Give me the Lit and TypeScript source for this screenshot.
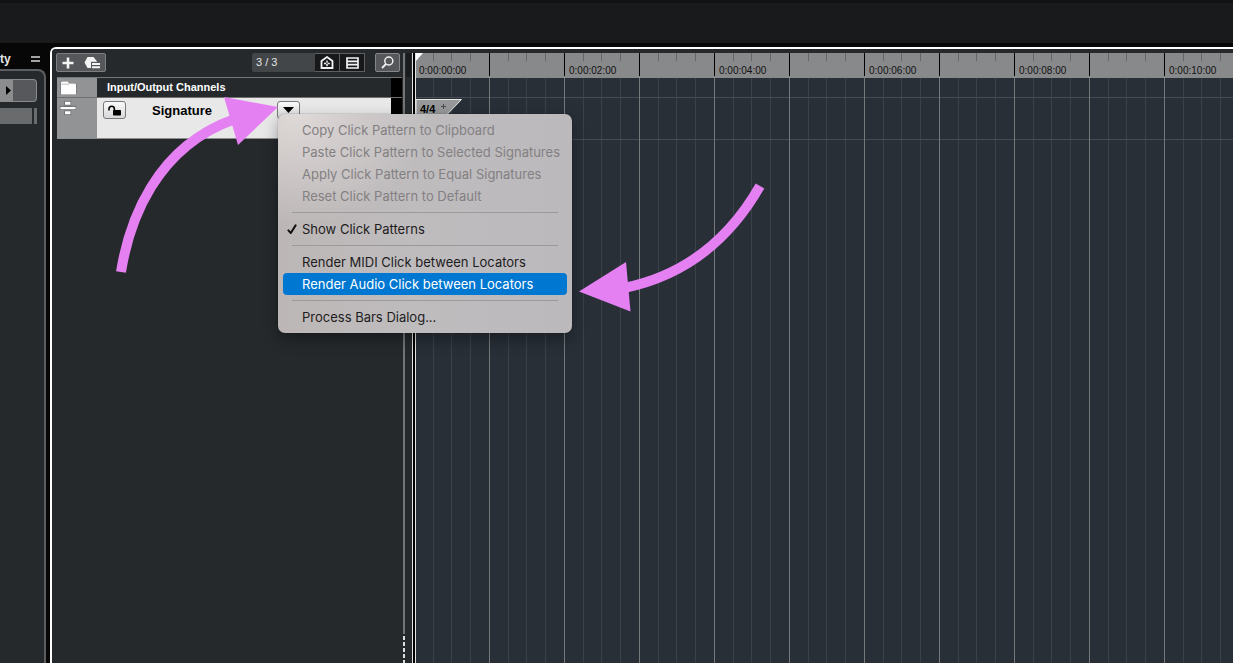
import { LitElement, html, css, nothing } from "lit";
import { customElement, state } from "lit/decorators.js";

type MenuEntry =
  | { kind: "separator" }
  | { kind: "item"; label: string; disabled?: boolean; checked?: boolean; active?: boolean };

const MENU: MenuEntry[] = [
  { kind: "item", label: "Copy Click Pattern to Clipboard", disabled: true },
  { kind: "item", label: "Paste Click Pattern to Selected Signatures", disabled: true },
  { kind: "item", label: "Apply Click Pattern to Equal Signatures", disabled: true },
  { kind: "item", label: "Reset Click Pattern to Default", disabled: true },
  { kind: "separator" },
  { kind: "item", label: "Show Click Patterns", checked: true },
  { kind: "separator" },
  { kind: "item", label: "Render MIDI Click between Locators" },
  { kind: "item", label: "Render Audio Click between Locators", active: true },
  { kind: "separator" },
  { kind: "item", label: "Process Bars Dialog..." },
];

@customElement("context-menu")
class ContextMenu extends LitElement {
  static styles = css`
    :host {
      display: block;
      box-sizing: border-box;
      padding: 5px;
      border-radius: 7px;
      font-family: Inter, "Liberation Sans", sans-serif;
      background:
        radial-gradient(ellipse 130px 110px at 20px 0, #dfd9d8 0, #dfd9d800 100%),
        linear-gradient(90deg, #bcb7b6, #bfbcbe 45%, #bbb9bc);
      box-shadow: 0 0 1px #000a, 0 6px 16px #0005;
    }
    .item {
      display: flex;
      align-items: center;
      width: 100%;
      height: 22px;
      padding: 0;
      border: 0;
      border-radius: 4px;
      background: none;
      color: #1d1c1d;
      font: 400 13px/22px Inter, "Liberation Sans", sans-serif;
      text-align: left;
      white-space: nowrap;
    }
    .item:disabled {
      color: #838082;
    }
    .item.active {
      background: #0077d0;
      color: #fff;
    }
    .mark {
      display: flex;
      flex: none;
      width: 19px;
      padding-left: 4px;
      box-sizing: border-box;
    }
    .separator {
      height: 1px;
      margin: 5px 9px;
      border: 0;
      background: #9c999b;
    }
  `;

  render() {
    return MENU.map((entry) =>
      entry.kind === "separator"
        ? html`<hr class="separator" />`
        : html`<button
            class="item ${entry.active ? "active" : ""}"
            role="menuitem"
            ?disabled=${entry.disabled}
          >
            <span class="mark"
              >${entry.checked
                ? html`<svg width="11" height="12" viewBox="0 0 11 12" fill="none">
                    <path d="M1.4 7.4 3.8 10 8.600 2.400" stroke="#111" stroke-width="2" stroke-linecap="round" stroke-linejoin="round" />
                  </svg>`
                : nothing}</span
            >${entry.label}
          </button>`
    );
  }
}

@customElement("inspector-panel")
class InspectorPanel extends LitElement {
  static styles = css`
    :host {
      display: flex;
      flex-direction: column;
      background: #070707;
      font-family: "Liberation Sans", Arial, sans-serif;
    }
    .head {
      display: flex;
      align-items: center;
      justify-content: space-between;
      box-sizing: border-box;
      height: 22px;
      padding: 2px 6px 0 0;
      color: #e6e6e6;
      font-size: 12px;
      font-weight: 700;
    }
    .menu {
      display: flex;
      padding: 0;
      border: 0;
      background: none;
    }
    .body {
      display: flex;
      flex: 1;
      flex-direction: column;
      gap: 6px;
      padding: 8px 7px 0 0;
      border: 2px solid #5b5e61;
      border-left: 0;
      border-bottom: 0;
      border-top-right-radius: 8px;
      background: #25292c;
    }
    .section {
      display: flex;
      height: 23px;
      padding: 0;
      border: 1px solid #8a8b8d;
      border-left: 0;
      border-radius: 0 4px 4px 0;
      background: #56585c;
      overflow: hidden;
    }
    .section span {
      display: flex;
      align-items: center;
      justify-content: flex-end;
      width: 13px;
      height: 100%;
      background: #8c8d8f;
    }
    .field {
      display: flex;
      gap: 2px;
      height: 16px;
    }
    .field i {
      flex: 1;
      background: #6a6b6d;
    }
    .field i + i {
      flex: 0 0 3px;
    }
  `;

  render() {
    return html`
      <div class="head">
        <span>ty</span>
        <button class="menu" aria-label="Inspector setup">
          <svg width="9" height="6"><path d="M0 1h9M0 5h9" stroke="#d8d8d8" stroke-width="1.6" /></svg>
        </button>
      </div>
      <div class="body">
        <button class="section" aria-label="Open section">
          <span><svg width="7" height="9"><path d="M0 0 5 4.5 0 9z" /></svg></span>
        </button>
        <div class="field"><i></i><i></i></div>
      </div>
    `;
  }
}

@customElement("track-list")
class TrackList extends LitElement {
  static styles = css`
    :host {
      display: block;
      padding: 4px 1px 0 4px;
      background: #25292c;
      font-family: "Liberation Sans", Arial, sans-serif;
    }
    button {
      display: flex;
      align-items: center;
      justify-content: center;
      padding: 0;
      box-sizing: border-box;
    }
    .toolbar {
      display: flex;
      height: 19px;
      padding-right: 2px;
      margin-bottom: 5px;
    }
    .group {
      display: flex;
      border: 1px solid #7d7e80;
      border-radius: 2px;
      background: #55575a;
    }
    .group button {
      width: 22px;
      border: 0;
      background: none;
    }
    .group button + button {
      width: 26px;
    }
    .visible {
      display: flex;
      margin-left: auto;
      border-radius: 2px;
      background: #434649;
      color: #e4e4e4;
      font-size: 11px;
      line-height: 19px;
    }
    .visible span {
      width: 59px;
      padding-left: 4px;
    }
    .visible button {
      width: 25px;
      border: 1px solid #5d5f61;
      border-left-width: 0;
      background: #16181a;
    }
    .search {
      width: 25px;
      margin-left: 10px;
      border: 1px solid #85868a;
      border-radius: 2px;
      background: #55575b;
    }
    .rows {
      margin-left: 1px;
      border-top: 1px solid #737577;
    }
    .row {
      display: flex;
    }
    .type {
      flex: none;
      box-sizing: border-box;
      width: 40px;
      padding: 3px 0 0 3px;
      background: #929395;
    }
    .folder {
      height: 19px;
    }
    .folder .name {
      flex: 1;
      padding-left: 10px;
      background: #25292c;
      color: #fff;
      font-size: 11px;
      font-weight: 700;
      line-height: 19px;
    }
    .end {
      flex: none;
      width: 11px;
      background: #000;
    }
    .signature {
      height: 42px;
      box-sizing: border-box;
      border-top: 1px solid #6d6f71;
      border-bottom: 1px solid #8d8e90;
    }
    .controls {
      display: flex;
      flex: 1;
      align-items: flex-start;
      padding: 3px 0 0 6px;
      background: #e8e8e8;
    }
    .controls button {
      width: 23px;
      height: 18px;
      border: 1px solid #77787a;
      border-radius: 3px;
      background: linear-gradient(#fafafa, #d8d8da);
    }
    .title {
      flex: 1;
      padding-left: 26px;
      color: #000;
      font-size: 13px;
      font-weight: 700;
      line-height: 20px;
    }
    .dropdown {
      position: relative;
      width: 114px;
    }
    .dropdown context-menu {
      position: absolute;
      top: 13px;
      left: 1px;
      width: 294px;
    }
  `;

  @state() private open = true;

  render() {
    return html`
      <div class="toolbar">
        <div class="group">
          <button aria-label="Add track">
            <svg width="12" height="12"><path d="M6 .5v11M.5 6h11" stroke="#f4f4f4" stroke-width="2.6" /></svg>
          </button>
          <button aria-label="Use track preset">
            <svg width="17" height="13" viewBox="0 0 17 13">
              <path d="M3.500 1h6L13 5.500 9.500 12h-6L.5 6.500z" fill="#f4f4f4" />
              <path d="M7 5.800h10V13H7z" fill="#55575a" />
              <path d="M8 8h8M8 11.300h8" stroke="#f4f4f4" stroke-width="2" />
            </svg>
          </button>
        </div>
        <div class="visible">
          <span>3 / 3</span>
          <button aria-label="Track divider">
            <svg width="14" height="13" viewBox="0 0 14 13" fill="none" stroke="#f2f2f2">
              <path d="M1.500 12V5L7 1l5.500 4v7z" stroke-width="1.800" />
              <path d="M7 4.500v6M4 7.500h6" stroke-width="1.400" stroke-dasharray="2.200 1.400" />
            </svg>
          </button>
          <button aria-label="Track visibility">
            <svg width="13" height="12" fill="none" stroke="#f2f2f2">
              <path d="M1 1h11v10H1zM1 4.300h11M1 7.700h11" stroke-width="1.700" />
            </svg>
          </button>
        </div>
        <button class="search" aria-label="Find tracks">
          <svg width="13" height="13" fill="none" stroke="#f0f0f0">
            <circle cx="7.800" cy="5" r="4" stroke-width="1.500" />
            <path d="M5 8 1 12" stroke-width="1.800" />
          </svg>
        </button>
      </div>
      <div class="rows">
        <div class="row folder">
          <div class="type">
            <svg width="17" height="14">
              <path d="M1 13.500V1.500L2 .5h6l1 2h6l1 1v10z" fill="#fff" stroke="#6a6b6d" stroke-width="1" paint-order="stroke" />
              <path d="M1.500 3.200h7.500" stroke="#a5a6a8" stroke-width=".8" />
            </svg>
          </div>
          <div class="name">Input/Output Channels</div>
          <div class="end"></div>
        </div>
        <div class="row signature">
          <div class="type">
            <svg width="16" height="14" fill="#fff" stroke="#66686a" stroke-width="1.400" paint-order="stroke">
              <path d="M5 .8h5.500v3H5zM.5 6h15v2.300H.5zM5 10.300h5.500v3H5z" />
            </svg>
          </div>
          <div class="controls">
            <button aria-label="Lock track">
              <svg width="14" height="11" viewBox="0 0 14 11">
                <rect x="5" y="5" width="8" height="5.500" rx=".8" />
                <path d="M1 5.500V4a2.600 2.600 0 0 1 5.400 0v1.500" fill="none" stroke="#000" stroke-width="1.600" />
              </svg>
            </button>
            <span class="title">Signature</span>
            <div class="dropdown">
              <button aria-label="Signature menu" aria-expanded=${this.open} @click=${() => (this.open = !this.open)}>
                <svg width="11" height="6"><path d="M0 0h11L5.500 6z" /></svg>
              </button>
              ${this.open ? html`<context-menu role="menu"></context-menu>` : nothing}
            </div>
          </div>
          <div class="end"></div>
        </div>
      </div>
    `;
  }
}

@customElement("time-line")
class TimeLine extends LitElement {
  static styles = css`
    :host {
      display: flex;
      flex-direction: column;
      min-width: 0;
      overflow: hidden;
      font-family: "Liberation Sans", Arial, sans-serif;
      border-top: 4px solid #25292c;
    }
    .ruler {
      position: relative;
      display: flex;
      height: 25px;
      background:
        linear-gradient(90deg, #0000 17px, #66676a 17px 18px, #0000 18px 35px, #66676a 35px 36px, #0000 36px 54px, #66676a 54px 55px, #0000 55px) 0 0 / 75px 8px repeat-x,
        linear-gradient(90deg, #0000 73px, #000 73px 74px, #0000 74px) 0 0 / 75px 23px repeat-x,
        #88898b;
    }
    .ruler span {
      flex: 0 0 150px;
      box-sizing: border-box;
      padding: 12px 0 0 3px;
      color: #111;
      font-size: 10px;
      line-height: 12px;
    }
    .ruler span:last-of-type {
      flex: 0 1 150px;
    }
    .start {
      position: absolute;
      top: 0;
      left: 0;
    }
    .grid {
      position: relative;
      flex: 1;
      background:
        linear-gradient(90deg, #0000 73px, #75797a 73px 74px, #0000 74px) 0 0 / 75px 100%,
        linear-gradient(#454c53, #454c53) 0 19px / 100% 1px no-repeat,
        linear-gradient(#454c53, #454c53) 0 61px / 100% 1px no-repeat,
        linear-gradient(90deg, #0000 17px, #3a4148 17px 18px, #0000 18px 35px, #3a4148 35px 36px, #0000 36px 54px, #3a4148 54px 55px, #0000 55px) 0 0 / 75px 100%,
        #282f37;
    }
    .event {
      position: absolute;
      top: 21px;
      left: 0;
      width: 48px;
      height: 18px;
    }
    .event svg {
      position: absolute;
      top: 0;
      left: 0;
    }
    .event span {
      position: relative;
      padding-left: 4px;
      color: #000;
      font-size: 11px;
      font-weight: 700;
      line-height: 20px;
    }
  `;

  @state() private labels = 1;

  private observer = new ResizeObserver(() => {
    this.labels = Math.floor((this.clientWidth - 50) / 150) + 1;
  });

  connectedCallback() {
    super.connectedCallback();
    this.observer.observe(this);
  }

  disconnectedCallback() {
    super.disconnectedCallback();
    this.observer.disconnect();
  }

  render() {
    const marks = Array.from({ length: this.labels }, (_, i) => i * 2);
    return html`
      <div class="ruler">
        ${marks.map((s) => html`<span>0:00:${String(s).padStart(2, "0")}:00</span>`)}
        <svg class="start" width="8" height="8"><path d="M0 0h7L0 8z" fill="#fff" /></svg>
      </div>
      <div class="grid">
        <div class="event">
          <svg width="48" height="18">
            <path d="M0 .5h45.500L29 17.500H0z" fill="#97989a" stroke="#e8e8e8" />
            <path d="M27.500 5v5M25 7.500h5" stroke="#4a4b4d" />
          </svg>
          <span>4/4</span>
        </div>
      </div>
    `;
  }
}

@customElement("app-root")
class AppRoot extends LitElement {
  static styles = css`
    :host {
      position: relative;
      display: flex;
      flex-direction: column;
      height: 100vh;
      overflow: hidden;
      background: #070707;
    }
    .top {
      flex: none;
      height: 40px;
      border-top: 3px solid #111213;
      background: #191a1c;
    }
    .main {
      display: flex;
      flex: 1;
      min-height: 0;
      padding-top: 4px;
    }
    inspector-panel {
      flex: 0 0 46px;
    }
    .project {
      display: flex;
      flex: 1;
      min-width: 0;
      margin-left: 4px;
      border-top: 2px solid #fff;
      border-left: 2px solid #fff;
      border-top-left-radius: 6px;
      background: #25292c;
    }
    track-list {
      position: relative;
      z-index: 1;
      flex: 0 0 346px;
      border-top-left-radius: 4px;
    }
    .splitter {
      display: flex;
      flex: none;
      width: 9px;
      flex-direction: column;
      padding-top: 4px;
      background: linear-gradient(#0000 4px, #191b1d 4px 28px, #0000 28px) 3px 0 / 5px 100% no-repeat;
    }
    .bar {
      flex: 1;
      width: 2px;
      background: #737476;
    }
    .handle {
      width: 2px;
      height: 29px;
      background: repeating-linear-gradient(#25292c 0 2px, #dcdedd 2px 6px);
    }
    .cursor {
      flex: none;
      width: 2px;
      border: solid #e3e3e3;
      border-width: 0 1px;
      margin-top: 4px;
      background: #000;
    }
    time-line {
      flex: 1;
    }
    .arrows {
      position: absolute;
      top: 0;
      left: 0;
      z-index: 2;
      pointer-events: none;
    }
  `;

  render() {
    return html`
      <header class="top"></header>
      <main class="main">
        <inspector-panel></inspector-panel>
        <section class="project">
          <track-list></track-list>
          <div class="splitter">
            <div class="bar"></div>
            <div class="handle"></div>
          </div>
          <div class="cursor"></div>
          <time-line></time-line>
        </section>
      </main>
      <svg class="arrows" width="780" height="330" fill="#e580f3" aria-hidden="true">
        <g fill="none" stroke="#e580f3" stroke-width="10">
          <path d="M121 272C129 222 155 147 235 119" />
          <path d="M760 186Q712 270 624 288" />
        </g>
        <path d="M224 97 278 107 238 145zM579 291.500 626 262 630.500 311.500z" />
      </svg>
    `;
  }
}
